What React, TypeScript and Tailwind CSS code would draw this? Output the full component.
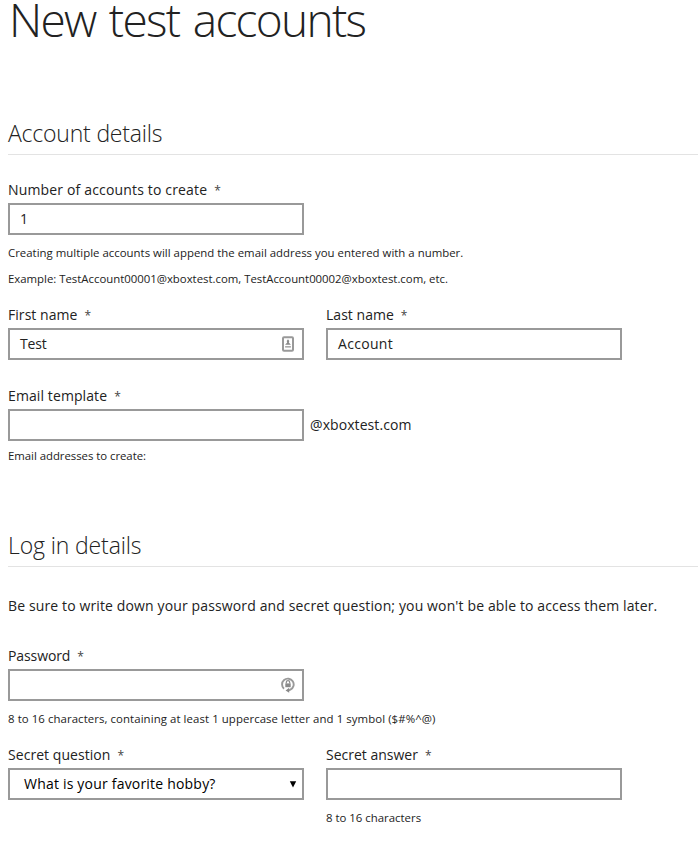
import type { ReactNode } from "react";

function Label({ text, track = "tracking-[0.12px]" }: { text: string; track?: string }) {
  return (
    <div className="flex h-5 items-baseline gap-[7px] whitespace-nowrap leading-5">
      <span className={track}>{text}</span>
      <span className="text-[12px] leading-none text-[#444]">*</span>
    </div>
  );
}

function Box({ value = "", children, inset = "pl-2.5", track = "tracking-[0.12px]" }: { value?: string; children?: ReactNode; inset?: string; track?: string }) {
  return (
    <div className={`mt-[3px] flex h-8 w-[296px] items-center justify-between border-2 border-[#999] bg-white ${inset}`}>
      <span className={`whitespace-nowrap leading-5 ${track}`}>{value}</span>
      {children}
    </div>
  );
}

function Hint({ children, className = "" }: { children: ReactNode; className?: string }) {
  return <p className={`h-[18px] whitespace-nowrap text-[11.4px] leading-[18px] ${className}`}>{children}</p>;
}

function Heading({ children, className }: { children: ReactNode; className: string }) {
  return (
    <h2 className={`h-[37px] border-b border-[#e3e3e3] text-[23px] font-light leading-[30px] ${className}`}>{children}</h2>
  );
}

function ContactIcon() {
  return (
    <svg className="mr-2 block" width="12" height="16" viewBox="0 0 12 16">
      <rect x="1" y="1.2" width="10" height="13.6" rx="1" fill="#fff" stroke="#999" strokeWidth="2" />
      <path d="M6 3.2 7.3 5 6.8 6.5 8.9 8.8H3.1L5.2 6.5 4.7 5Z" fill="#8a8a8a" />
      <path d="M3.1 10.8h5.8" stroke="#aaa" strokeWidth="1.6" />
    </svg>
  );
}

function LockIcon() {
  return (
    <svg className="mr-[7px] block" width="14" height="16" viewBox="0 0 14 16" fill="none">
      <path d="M3 11.8A5.8 5.8 0 1 1 9.4 12.7L7 13.6" stroke="#999" strokeWidth="1.9" />
      <path d="M8.2 10.8v5L4.6 13.5Z" fill="#888" />
      <rect x="4.3" y="6.4" width="5.4" height="3.8" fill="#8a8a8a" />
      <path d="M5.3 6.6V5.3a1.7 1.7 0 0 1 3.4 0v1.3" stroke="#8a8a8a" strokeWidth="1.2" />
    </svg>
  );
}

export default function App() {
  return (
    <main className="flex h-[856px] w-full flex-col overflow-hidden bg-white pl-2 font-['Open_Sans','Noto_Sans',sans-serif] text-[14px] text-[#222]">
      <h1 className="h-[38px] whitespace-nowrap pl-px text-[46px] font-light leading-[38px] tracking-[-1.7px] [word-spacing:3px]">New test accounts</h1>

      <Heading className="mt-20 tracking-[-0.2px]">Account details</Heading>
      <div className="mt-[25px]">
        <Label text="Number of accounts to create" track="tracking-[0.16px]" />
        <Box value="1" />
        <Hint className="mt-[9px] tracking-[0.015px]">Creating multiple accounts will append the email address you entered with a number.</Hint>
        <Hint className="mt-2 tracking-[-0.015px]">Example: TestAccount00001@xboxtest.com, TestAccount00002@xboxtest.com, etc.</Hint>
      </div>

      <div className="mt-[17px] flex gap-[22px]">
        <div>
          <Label text="First name" track="tracking-[0.05px]" />
          <Box value="Test" track="tracking-[-0.2px]"><ContactIcon /></Box>
        </div>
        <div>
          <Label text="Last name" track="tracking-[0.03px]" />
          <Box value="Account" track="tracking-[0.3px]" />
        </div>
      </div>

      <div className="mt-[26px]">
        <Label text="Email template" track="tracking-[0.1px]" />
        <div className="flex items-center gap-1.5">
          <Box />
          <span className="mt-[3px] leading-5 tracking-[0.08px]">@xboxtest.com</span>
        </div>
        <Hint className="mt-1.5 tracking-[-0.04px]">Email addresses to create:</Hint>
      </div>

      <Heading className="mt-[65px] tracking-[-0.13px]">Log in details</Heading>
      <p className="mt-[29px] h-5 whitespace-nowrap leading-5 tracking-[0.13px]">
        Be sure to write down your password and secret question; you won't be able to access them later.
      </p>

      <div className="mt-[30px]">
        <Label text="Password" track="tracking-[-0.1px]" />
        <Box><LockIcon /></Box>
        <Hint className="mt-[9px] tracking-[0.08px]">8 to 16 characters, containing at least 1 uppercase letter and 1 symbol ($#%^@)</Hint>
      </div>

      <div className="mt-[17px] flex gap-[22px]">
        <div>
          <Label text="Secret question" track="tracking-[0.05px]" />
          <Box value="What is your favorite hobby?" inset="pl-3.5 text-black" track="tracking-[0.2px]">
            <svg className="mr-[5px] block" width="8" height="7" viewBox="0 0 8 7"><path d="M.8.2h6.4L4 6.6Z" fill="#000" /></svg>
          </Box>
        </div>
        <div>
          <Label text="Secret answer" track="tracking-[0px]" />
          <Box />
          <Hint className="mt-[9px]">8 to 16 characters</Hint>
        </div>
      </div>
    </main>
  );
}
